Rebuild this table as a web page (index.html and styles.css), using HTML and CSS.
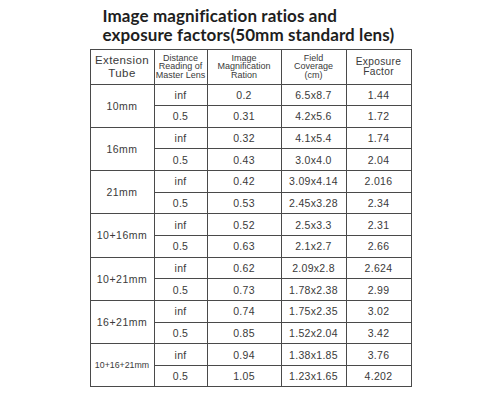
FILE: index.html
```html
<!DOCTYPE html>
<html lang="en">
<head>
    <meta charset="UTF-8" />
    <title>Image magnification ratios</title>
    <link rel="stylesheet" href="styles.css">
</head>
<body>
    <div class="sheet">
        <h1 class="title">Image magnification ratios and<br>exposure factors(50mm standard lens)</h1>

        <table class="ratios">
            <tr class="head">
                <th class="tube-head">Extension<br>Tube</th>
                <th class="small">Distance<br>Reading of<br>Master Lens</th>
                <th class="small">Image<br>Magnification<br>Ration</th>
                <th class="small">Field<br>Coverage<br>(cm)</th>
                <th class="factor-head">Exposure<br>Factor</th>
            </tr>
            <tr><td class="tube" rowspan="2">10mm</td><td>inf</td><td>0.2</td><td>6.5x8.7</td><td>1.44</td></tr>
            <tr><td>0.5</td><td>0.31</td><td>4.2x5.6</td><td>1.72</td></tr>
            <tr><td class="tube" rowspan="2">16mm</td><td>inf</td><td>0.32</td><td>4.1x5.4</td><td>1.74</td></tr>
            <tr><td>0.5</td><td>0.43</td><td>3.0x4.0</td><td>2.04</td></tr>
            <tr><td class="tube" rowspan="2">21mm</td><td>inf</td><td>0.42</td><td>3.09x4.14</td><td>2.016</td></tr>
            <tr><td>0.5</td><td>0.53</td><td>2.45x3.28</td><td>2.34</td></tr>
            <tr><td class="tube" rowspan="2">10+16mm</td><td>inf</td><td>0.52</td><td>2.5x3.3</td><td>2.31</td></tr>
            <tr><td>0.5</td><td>0.63</td><td>2.1x2.7</td><td>2.66</td></tr>
            <tr><td class="tube" rowspan="2">10+21mm</td><td>inf</td><td>0.62</td><td>2.09x2.8</td><td>2.624</td></tr>
            <tr><td>0.5</td><td>0.73</td><td>1.78x2.38</td><td>2.99</td></tr>
            <tr><td class="tube" rowspan="2">16+21mm</td><td>inf</td><td>0.74</td><td>1.75x2.35</td><td>3.02</td></tr>
            <tr><td>0.5</td><td>0.85</td><td>1.52x2.04</td><td>3.42</td></tr>
            <tr><td class="tube tight" rowspan="2">10+16+21mm</td><td>inf</td><td>0.94</td><td>1.38x1.85</td><td>3.76</td></tr>
            <tr><td>0.5</td><td>1.05</td><td>1.23x1.65</td><td>4.202</td></tr>
        </table>
    </div>
</body>
</html>
```

FILE: styles.css
```css
* {
    box-sizing: border-box;
}

body {
    margin: 0;
    background: #fff;
    color: #3a3a3a;
    font-family: 'Liberation Sans', Arial, sans-serif;
}

.sheet {
    width: 321px;
    margin: 0 auto;
    padding-top: 6px;
}

.title {
    margin: 0 0 5px 13px;
    font-family: Lato, 'Open Sans', sans-serif;
    font-weight: 700;
    font-size: 17px;
    line-height: 19px;
    letter-spacing: 0.1px;
    color: #1e1e1e;
    white-space: nowrap;
}

.ratios {
    width: 321px;
    border-collapse: collapse;
    table-layout: fixed;
}

.ratios th,
.ratios td {
    border: 1px solid #4a4a4a;
    padding: 0;
    text-align: center;
    vertical-align: middle;
    font-weight: normal;
}

.ratios th:nth-child(1) { width: 64px; }
.ratios th:nth-child(2) { width: 53px; }
.ratios th:nth-child(3) { width: 74px; }
.ratios th:nth-child(4) { width: 65px; }
.ratios th:nth-child(5) { width: 65px; }

.head {
    height: 34.5px;
}

.tube-head {
    font-size: 11.5px;
    line-height: 12.5px;
    letter-spacing: 0.4px;
}

.small {
    font-size: 9px;
    line-height: 8.6px;
    padding-top: 2px;
}

.factor-head {
    font-size: 10.2px;
    line-height: 9.5px;
    letter-spacing: 0.3px;
}

.ratios td {
    height: 21.65px;
    font-size: 10.5px;
    letter-spacing: 0.3px;
}

.ratios td.tube {
    font-size: 10.5px;
    letter-spacing: 0.5px;
}

.ratios td.tight {
    font-size: 8.8px;
    letter-spacing: 0;
    white-space: nowrap;
}
```
